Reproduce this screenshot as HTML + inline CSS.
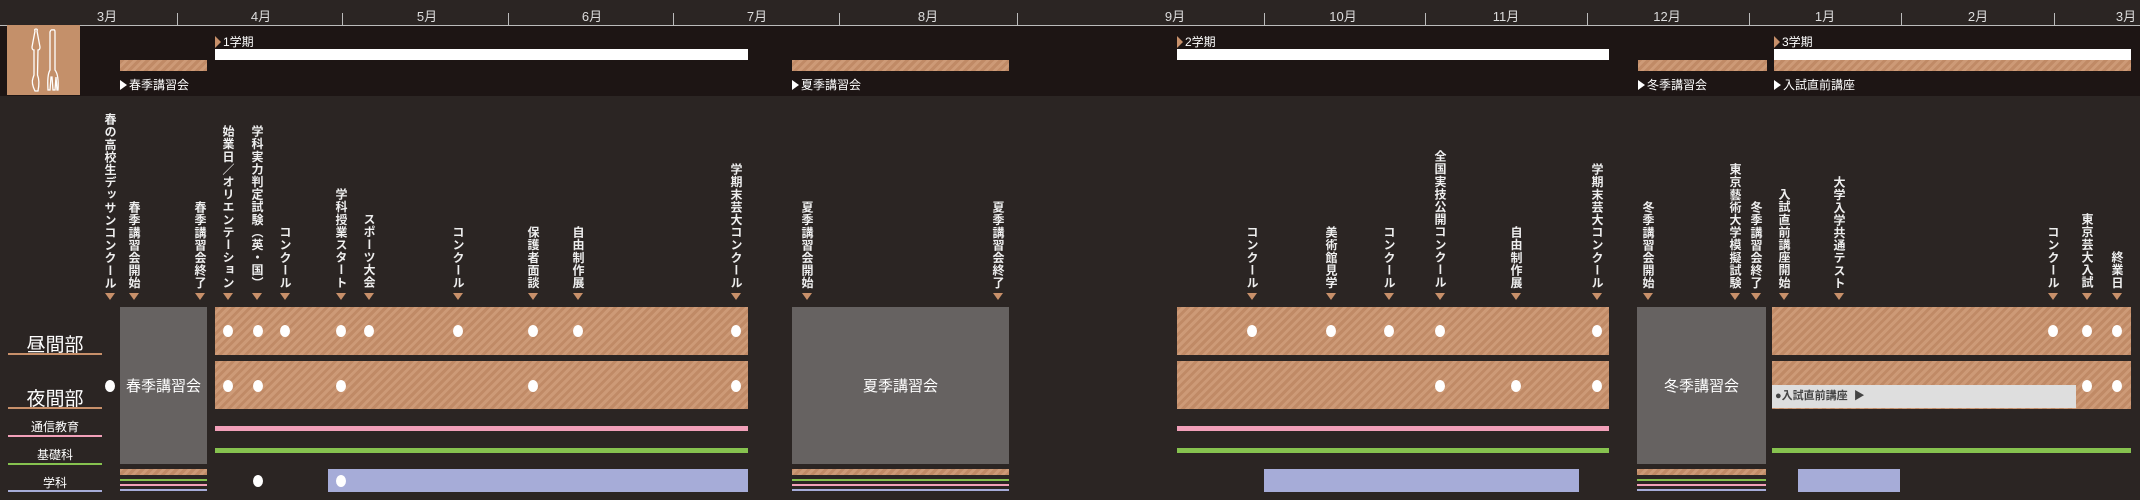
<!DOCTYPE html>
<html><head><meta charset="utf-8"><style>
*{margin:0;padding:0;box-sizing:border-box}
body{width:2140px;height:500px;background:#2b2523;position:relative;overflow:hidden;font-family:"Liberation Sans","Noto Sans CJK JP",sans-serif;color:#eee}
.a{position:absolute}
.hb{position:absolute;left:0;top:26px;width:2140px;height:70px;background:#1d1514}
.line{position:absolute;left:0;top:25px;width:2140px;height:1px;background:#bbb}
.tick{position:absolute;top:13px;width:1px;height:12px;background:#bbb}
.m{position:absolute;top:6px;font-size:13px;color:#ddd;transform:translateX(-50%);white-space:nowrap}
.tan{background:repeating-linear-gradient(-45deg,#c08a66 0 3px,#cd9a77 3px 6px)}
.wb{background:#fff}
.lab{position:absolute;font-size:12px;color:#fff;top:76px;white-space:nowrap}
.lab:before{content:"";display:inline-block;border-left:7px solid #fff;border-top:5px solid transparent;border-bottom:5px solid transparent;margin-right:2px;vertical-align:-1px}
.per{position:absolute;font-size:12px;color:#fff;top:33px;white-space:nowrap}
.per:before{content:"";display:inline-block;border-left:6px solid #c8906a;border-top:6px solid transparent;border-bottom:6px solid transparent;margin-right:2px;vertical-align:-2px}
.v{position:absolute;bottom:211px;writing-mode:vertical-rl;font-size:12px;letter-spacing:.6px;line-height:14px;color:#eee;transform:translateX(-50%);font-weight:bold}
.t{position:absolute;top:293px;width:0;height:0;border-left:5px solid transparent;border-right:5px solid transparent;border-top:7px solid #c8906a;transform:translateX(-50%)}
.d{position:absolute;width:10px;height:12px;border-radius:50%;background:#fff;transform:translate(-50%,-50%)}
.gray{background:#666261;position:absolute;color:#fff;font-size:15px;display:flex;align-items:center;justify-content:center}
.pink{background:#f2a0b9}.green{background:#86c24f}.blue{background:#a6acd8}
.rl{position:absolute;left:8px;width:94px;text-align:center;color:#fff}
</style></head><body>
<div class="hb"></div>
<div class="line"></div>
<div class="tick" style="left:177px"></div><div class="tick" style="left:342px"></div><div class="tick" style="left:508px"></div><div class="tick" style="left:673px"></div><div class="tick" style="left:839px"></div><div class="tick" style="left:1017px"></div><div class="tick" style="left:1264px"></div><div class="tick" style="left:1425px"></div><div class="tick" style="left:1587px"></div><div class="tick" style="left:1749px"></div><div class="tick" style="left:1901px"></div><div class="tick" style="left:2054px"></div>
<div class="m" style="left:107px">3月</div><div class="m" style="left:261px">4月</div><div class="m" style="left:427px">5月</div><div class="m" style="left:592px">6月</div><div class="m" style="left:757px">7月</div><div class="m" style="left:928px">8月</div><div class="m" style="left:1175px">9月</div><div class="m" style="left:1343px">10月</div><div class="m" style="left:1506px">11月</div><div class="m" style="left:1667px">12月</div><div class="m" style="left:1825px">1月</div><div class="m" style="left:1978px">2月</div><div class="m" style="left:2126px">3月</div>

<div class="a" style="left:7px;top:25px;width:73px;height:70px;background:#c4906a">
<svg width="73" height="70" viewBox="0 0 73 70"><g fill="none" stroke="#fff" stroke-width="1.3">
<path d="M28 6 Q27 4 29 4 Q31 4 30 6 L33 22 Q33 25 31 25 L30.5 50 Q33 56 31 66 L28 66 Q24 58 26 53 L27 50 L27 25 Q25 25 25 22 Z"/>
<path d="M46 5 Q44 4 43 7 L43 45 Q40 50 41 65 L43 65 L44 52 L45 52 L46 65 L48 65 L49 52 L50 65 L51 65 Q52 50 48 45 L48 7 Q48 4 46 5 Z"/>
</g></svg></div>

<div class="per" style="left:215px">1学期</div>
<div class="a wb" style="left:215px;top:49px;width:533px;height:11px"></div>
<div class="a tan" style="left:120px;top:60px;width:87px;height:11px"></div>
<div class="lab" style="left:120px">春季講習会</div>
<div class="a tan" style="left:792px;top:60px;width:217px;height:11px"></div>
<div class="lab" style="left:792px">夏季講習会</div>
<div class="per" style="left:1177px">2学期</div>
<div class="a wb" style="left:1177px;top:49px;width:432px;height:11px"></div>
<div class="a tan" style="left:1638px;top:60px;width:129px;height:11px"></div>
<div class="lab" style="left:1638px">冬季講習会</div>
<div class="per" style="left:1774px">3学期</div>
<div class="a wb" style="left:1774px;top:49px;width:357px;height:11px"></div>
<div class="a tan" style="left:1774px;top:60px;width:357px;height:11px"></div>
<div class="lab" style="left:1774px">入試直前講座</div>

<div class="v" style="left:110px">春の高校生デッサンコンクール</div><div class="t" style="left:110px"></div>
<div class="v" style="left:134px">春季講習会開始</div><div class="t" style="left:134px"></div>
<div class="v" style="left:200px">春季講習会終了</div><div class="t" style="left:200px"></div>
<div class="v" style="left:228px">始業日／オリエンテーション</div><div class="t" style="left:228px"></div>
<div class="v" style="left:257px">学科実力判定試験（英・国）</div><div class="t" style="left:257px"></div>
<div class="v" style="left:285px">コンクール</div><div class="t" style="left:285px"></div>
<div class="v" style="left:341px">学科授業スタート</div><div class="t" style="left:341px"></div>
<div class="v" style="left:369px">スポーツ大会</div><div class="t" style="left:369px"></div>
<div class="v" style="left:458px">コンクール</div><div class="t" style="left:458px"></div>
<div class="v" style="left:533px">保護者面談</div><div class="t" style="left:533px"></div>
<div class="v" style="left:578px">自由制作展</div><div class="t" style="left:578px"></div>
<div class="v" style="left:736px">学期末芸大コンクール</div><div class="t" style="left:736px"></div>
<div class="v" style="left:807px">夏季講習会開始</div><div class="t" style="left:807px"></div>
<div class="v" style="left:998px">夏季講習会終了</div><div class="t" style="left:998px"></div>
<div class="v" style="left:1252px">コンクール</div><div class="t" style="left:1252px"></div>
<div class="v" style="left:1331px">美術館見学</div><div class="t" style="left:1331px"></div>
<div class="v" style="left:1389px">コンクール</div><div class="t" style="left:1389px"></div>
<div class="v" style="left:1440px">全国実技公開コンクール</div><div class="t" style="left:1440px"></div>
<div class="v" style="left:1516px">自由制作展</div><div class="t" style="left:1516px"></div>
<div class="v" style="left:1597px">学期末芸大コンクール</div><div class="t" style="left:1597px"></div>
<div class="v" style="left:1648px">冬季講習会開始</div><div class="t" style="left:1648px"></div>
<div class="v" style="left:1735px">東京藝術大学模擬試験</div><div class="t" style="left:1735px"></div>
<div class="v" style="left:1756px">冬季講習会終了</div><div class="t" style="left:1756px"></div>
<div class="v" style="left:1784px">入試直前講座開始</div><div class="t" style="left:1784px"></div>
<div class="v" style="left:1839px">大学入学共通テスト</div><div class="t" style="left:1839px"></div>
<div class="v" style="left:2053px">コンクール</div><div class="t" style="left:2053px"></div>
<div class="v" style="left:2087px">東京芸大入試</div><div class="t" style="left:2087px"></div>
<div class="v" style="left:2117px">終業日</div><div class="t" style="left:2117px"></div>

<div class="rl" style="top:330px;font-size:19px">昼間部</div><div class="a" style="left:8px;top:353px;width:94px;height:2px;background:#c8906a"></div>
<div class="rl" style="top:384px;font-size:19px">夜間部</div><div class="a" style="left:8px;top:407px;width:94px;height:2px;background:#c8906a"></div>
<div class="rl" style="top:418px;font-size:12px">通信教育</div><div class="a pink" style="left:8px;top:435px;width:94px;height:2px"></div>
<div class="rl" style="top:446px;font-size:12px">基礎科</div><div class="a green" style="left:8px;top:463px;width:94px;height:2px"></div>
<div class="rl" style="top:474px;font-size:12px">学科</div><div class="a blue" style="left:8px;top:490px;width:94px;height:2px"></div>

<div class="gray" style="left:120px;top:307px;width:87px;height:157px">春季講習会</div>
<div class="gray" style="left:792px;top:307px;width:217px;height:157px">夏季講習会</div>
<div class="gray" style="left:1637px;top:307px;width:129px;height:157px">冬季講習会</div>

<div class="a tan" style="left:215px;top:307px;width:533px;height:48px"></div>
<div class="a tan" style="left:215px;top:361px;width:533px;height:48px"></div>
<div class="a pink" style="left:215px;top:426px;width:533px;height:5px"></div>
<div class="a green" style="left:215px;top:448px;width:533px;height:5px"></div>
<div class="a blue" style="left:328px;top:469px;width:420px;height:23px"></div>

<div class="a tan" style="left:1177px;top:307px;width:432px;height:48px"></div>
<div class="a tan" style="left:1177px;top:361px;width:432px;height:48px"></div>
<div class="a pink" style="left:1177px;top:426px;width:432px;height:5px"></div>
<div class="a green" style="left:1177px;top:448px;width:432px;height:5px"></div>
<div class="a blue" style="left:1264px;top:469px;width:315px;height:23px"></div>

<div class="a tan" style="left:1772px;top:307px;width:359px;height:48px"></div>
<div class="a tan" style="left:1772px;top:361px;width:359px;height:48px"></div>
<div class="a" style="left:1772px;top:385px;width:304px;height:23px;background:#dedede;color:#444;font-size:11px;line-height:23px;padding-left:3px;font-weight:bold">●入試直前講座 &nbsp;▶</div>
<div class="a green" style="left:1772px;top:448px;width:359px;height:5px"></div>
<div class="a blue" style="left:1798px;top:469px;width:102px;height:23px"></div>

<div class="a tan" style="left:120px;top:469px;width:87px;height:6px"></div><div class="a green" style="left:120px;top:479px;width:87px;height:2px"></div><div class="a pink" style="left:120px;top:484px;width:87px;height:2px"></div><div class="a blue" style="left:120px;top:489px;width:87px;height:2px"></div>
<div class="a tan" style="left:792px;top:469px;width:217px;height:6px"></div><div class="a green" style="left:792px;top:479px;width:217px;height:2px"></div><div class="a pink" style="left:792px;top:484px;width:217px;height:2px"></div><div class="a blue" style="left:792px;top:489px;width:217px;height:2px"></div>
<div class="a tan" style="left:1637px;top:469px;width:129px;height:6px"></div><div class="a green" style="left:1637px;top:479px;width:129px;height:2px"></div><div class="a pink" style="left:1637px;top:484px;width:129px;height:2px"></div><div class="a blue" style="left:1637px;top:489px;width:129px;height:2px"></div>

<div class="d" style="left:228px;top:331px"></div><div class="d" style="left:258px;top:331px"></div><div class="d" style="left:285px;top:331px"></div><div class="d" style="left:341px;top:331px"></div><div class="d" style="left:369px;top:331px"></div><div class="d" style="left:458px;top:331px"></div><div class="d" style="left:533px;top:331px"></div><div class="d" style="left:578px;top:331px"></div><div class="d" style="left:736px;top:331px"></div>
<div class="d" style="left:1252px;top:331px"></div><div class="d" style="left:1331px;top:331px"></div><div class="d" style="left:1389px;top:331px"></div><div class="d" style="left:1440px;top:331px"></div><div class="d" style="left:1597px;top:331px"></div>
<div class="d" style="left:2053px;top:331px"></div><div class="d" style="left:2087px;top:331px"></div><div class="d" style="left:2117px;top:331px"></div>
<div class="d" style="left:110px;top:386px"></div>
<div class="d" style="left:228px;top:386px"></div><div class="d" style="left:258px;top:386px"></div><div class="d" style="left:341px;top:386px"></div><div class="d" style="left:533px;top:386px"></div><div class="d" style="left:736px;top:386px"></div>
<div class="d" style="left:1440px;top:386px"></div><div class="d" style="left:1516px;top:386px"></div><div class="d" style="left:1597px;top:386px"></div>
<div class="d" style="left:2087px;top:386px"></div><div class="d" style="left:2117px;top:386px"></div>
<div class="d" style="left:258px;top:481px"></div><div class="d" style="left:341px;top:481px"></div>
</body></html>
